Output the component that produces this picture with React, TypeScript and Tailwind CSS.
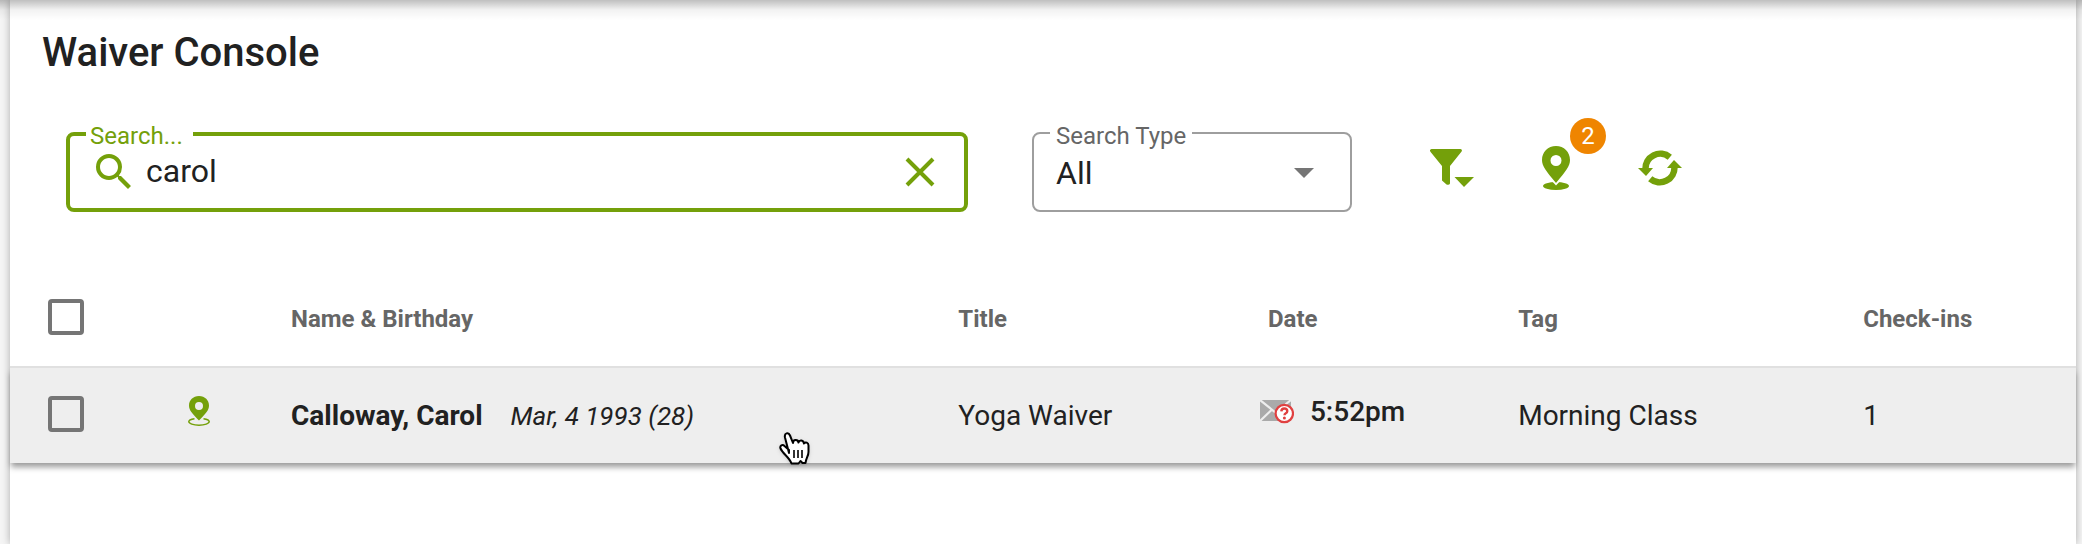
import React, { useState } from 'react'
import { MdSearch } from 'react-icons/md'

interface IconProps {
  className?: string
}

const FilterIcon = ({ className }: IconProps): React.ReactNode => (
  <svg viewBox="0 0 44 38" fill="currentColor" className={className} aria-hidden="true">
    <path d="M1.500 0h29q2.500.8.700 3L20 17v17.500q-.8 2-3.500 1L12 31.500V17L.6 3Q-1 .8 1.500 0Z" />
    <path d="M24.500 28H44L34 38Z" />
  </svg>
)

const PinIcon = ({ className }: IconProps): React.ReactNode => (
  <svg viewBox="0 0 28 44" fill="currentColor" className={className} aria-hidden="true">
    <ellipse cx="14" cy="40" rx="13" ry="4" />
    <path d="M8 33 14 39.500 20 33Z" fill="#fff" />
    <path
      fillRule="evenodd"
      d="M14 0C6 0 0 6 0 14c0 6 4 11 14 23C24 25 28 20 28 14 28 6 22 0 14 0Zm0 9a5.500 5.500 0 1 1 0 11 5.500 5.500 0 0 1 0-11Z"
    />
  </svg>
)

const PinRingIcon = ({ className }: IconProps): React.ReactNode => (
  <svg viewBox="0 0 22 30" fill="currentColor" className={className} aria-hidden="true">
    <path
      d="M6.500 22.700C3 23.200.8 24.200.8 25.600c0 2 4.500 3.600 10.200 3.600s10.200-1.600 10.200-3.600c0-1.400-2.200-2.400-5.700-2.900"
      fill="none"
      stroke="currentColor"
      strokeWidth="1.5"
    />
    <path
      fillRule="evenodd"
      d="M11 0C5 0 1 4.300 1 9.500 1 14 4 17.500 11 24.500 18 17.500 21 14 21 9.500 21 4.300 17 0 11 0Zm0 6a4 4 0 1 1 0 8 4 4 0 0 1 0-8Z"
    />
  </svg>
)

const RefreshIcon = ({ className }: IconProps): React.ReactNode => (
  <svg viewBox="0 0 44 36" className={className} aria-hidden="true">
    <g fill="none" stroke="currentColor" strokeWidth="6.5">
      <path d="M31.800 7.200A14.700 14.700 0 0 0 7.600 19.500" />
      <path d="M12.200 28.800A14.700 14.700 0 0 0 36.400 16.500" />
    </g>
    <path d="M0 18h15L8 26Z" fill="currentColor" />
    <path d="M44 18H29L36 10Z" fill="currentColor" />
  </svg>
)

const MailUnknownIcon = ({ className }: IconProps): React.ReactNode => (
  <svg viewBox="0 0 34 24" className={className} aria-hidden="true">
    <path d="M0 0h31v21H0Z" fill="#aaa" />
    <path d="M0 0 15.500 12.500 31 0M0 21 11.500 10" fill="none" stroke="#eee" strokeWidth="2.2" />
    <circle cx="24.300" cy="13.500" r="8.700" fill="#fff" stroke="#e04040" strokeWidth="2.2" />
    <path
      d="M21.300 11.300q.2-2.800 3-2.800t3 2.600q0 1.400-1.500 2.200-1.300.7-1.300 2"
      fill="none"
      stroke="#e04040"
      strokeWidth="2.4"
    />
    <circle cx="24.400" cy="18" r="1.500" fill="#e04040" />
  </svg>
)

const HandCursor = ({ className }: IconProps): React.ReactNode => (
  <svg viewBox="0 0 32 36" className={className} aria-hidden="true">
    <path
      d="M11 22 7 6.500C6 2 10.500.8 12 4.500L15 12c0-4 5-4 5.500-.5 1-3 5-2.500 5.500 1 1.500-2 4.500-1 4.500 2V21c0 4-2.500 6-3 11h-3l-2-2-2 2.500h-7C11.500 26.500 5 23 2.500 17.500c-1-3 2-4.500 4-2.500L11 19Z"
      fill="#fff"
      stroke="#000"
      strokeWidth="2"
      strokeLinejoin="round"
    />
    <path d="M16 19v8M20 19v8M24 19v8" stroke="#000" strokeWidth="1.6" />
  </svg>
)

const Checkbox = ({ label }: { label: string }): React.ReactNode => (
  <input
    type="checkbox"
    aria-label={label}
    className="mb-1 block size-9 appearance-none rounded-sm border-4 border-[#757575] checked:bg-[#74a00a]"
  />
)

const waivers = [
  {
    name: 'Calloway, Carol',
    birthday: 'Mar, 4 1993 (28)',
    title: 'Yoga Waiver',
    date: '5:52pm',
    tag: 'Morning Class',
    checkIns: 1
  }
]

export default function App(): React.ReactNode {
  const [search, setSearch] = useState('carol')

  return (
    <div className="relative min-h-screen bg-[#f5f5f5] pr-1.5 pl-2.5 font-['Roboto',sans-serif] text-[#212121]">
      <main className="min-h-screen bg-white shadow-[0_0_8px_rgba(0,0,0,0.3)]">
        <h1 className="px-8 pt-7 text-[40px] leading-[50px] font-medium">Waiver Console</h1>

        <div className="flex items-center pt-[54px] pl-14">
          <div className="relative flex h-20 w-[902px] items-center rounded-lg border-4 border-[#74a00a] pr-7 pl-5 text-[#74a00a]">
            <label
              htmlFor="search"
              className="absolute -top-3 left-4 bg-white pr-2.5 pl-1 text-2xl leading-6"
            >
              Search...
            </label>
            <MdSearch size={48} className="shrink-0" />
            <input
              id="search"
              type="text"
              value={search}
              onChange={(e) => setSearch(e.target.value)}
              className="ml-2 min-w-0 flex-1 pb-0.5 text-[32px] leading-10 text-[#212121] outline-none"
            />
            <button type="button" aria-label="Clear search" onClick={() => setSearch('')}>
              <svg viewBox="0 0 32 32" className="size-8" aria-hidden="true">
                <path d="M3 3 29 29M29 3 3 29" stroke="currentColor" strokeWidth="4" />
              </svg>
            </button>
          </div>

          <div className="relative ml-16 h-20 w-80">
            <select
              id="search-type"
              className="size-full appearance-none rounded-lg border-2 border-[#9e9e9e] bg-white pt-0.5 pl-5.5 text-[32px] leading-10 outline-none"
            >
              <option>All</option>
            </select>
            <label
              htmlFor="search-type"
              className="absolute -top-2 left-4.5 bg-white px-1.5 text-2xl leading-6 text-[#666]"
            >
              Search Type
            </label>
            <svg
              viewBox="0 0 20 10"
              className="pointer-events-none absolute top-9 right-9.5 h-2.5 w-5 text-[#757575]"
              aria-hidden="true"
            >
              <path d="M0 0H20L10 10Z" fill="currentColor" />
            </svg>
          </div>

          <div className="mb-2 ml-19.5 flex items-center gap-17 text-[#74a00a]">
            <button type="button" aria-label="Filter">
              <FilterIcon className="h-9.5 w-11" />
            </button>
            <button type="button" aria-label="Locations" className="relative">
              <PinIcon className="h-11 w-7" />
              <span className="absolute -top-7 left-7 flex size-9 items-center justify-center rounded-full bg-[#ef8500] text-2xl leading-6 text-white">
                2
              </span>
            </button>
            <button type="button" aria-label="Refresh">
              <RefreshIcon className="h-9 w-11" />
            </button>
          </div>
        </div>

        <table className="mt-[59px] w-full table-fixed text-left text-[28px] leading-8">
          <colgroup>
            <col className="w-[140px]" />
            <col className="w-[141px]" />
            <col className="w-[32.3%]" />
            <col className="w-[14.6%]" />
            <col className="w-[12.5%]" />
            <col className="w-[16.7%]" />
            <col />
          </colgroup>
          <thead>
            <tr className="h-24 border-b-2 border-[#e0e0e0] text-2xl text-[#666]">
              <th className="pl-9.5">
                <Checkbox label="Select all" />
              </th>
              <td />
              <th className="font-bold">Name &amp; Birthday</th>
              <th className="font-bold">Title</th>
              <th className="pl-2 font-bold">Date</th>
              <th className="font-bold">Tag</th>
              <th className="font-bold">Check-ins</th>
            </tr>
          </thead>
          <tbody>
            {waivers.map((waiver) => (
              <tr
                key={waiver.name}
                className="h-24 bg-[#eee] shadow-[0_5px_6px_-1px_rgba(0,0,0,0.4)]"
              >
                <td className="pl-9.5">
                  <Checkbox label={`Select ${waiver.name}`} />
                </td>
                <td>
                  <PinRingIcon className="mb-2.5 ml-9.5 h-7.5 w-5.5 text-[#74a00a]" />
                </td>
                <td className="relative">
                  <b>{waiver.name}</b>
                  <i className="ml-7 text-[26px]">{waiver.birthday}</i>
                  <HandCursor className="absolute top-[63px] left-[487px] h-9 w-8 drop-shadow" />
                </td>
                <td>{waiver.title}</td>
                <td>
                  <div className="mb-2 flex items-center gap-4 font-medium">
                    <MailUnknownIcon className="h-6 w-8.5" />
                    {waiver.date}
                  </div>
                </td>
                <td>{waiver.tag}</td>
                <td>{waiver.checkIns}</td>
              </tr>
            ))}
          </tbody>
        </table>
      </main>
      {/* shadow of the app bar */}
      <div className="pointer-events-none absolute inset-x-0 top-0 h-5 bg-linear-to-b from-black/25 via-black/5 to-transparent" />
    </div>
  )
}
